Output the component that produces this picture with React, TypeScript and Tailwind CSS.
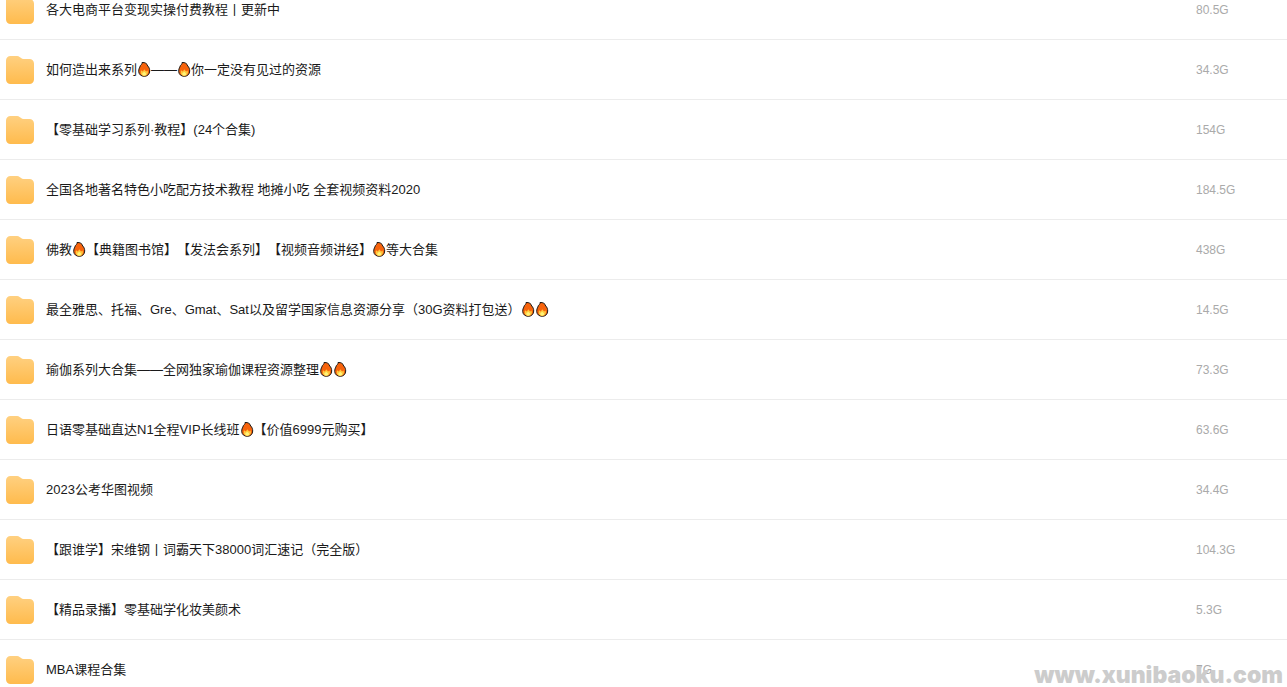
import { Fragment } from "react";

type Entry = { name: string; size: string };

const entries: Entry[] = [
  { name: "各大电商平台变现实操付费教程丨更新中", size: "80.5G" },
  { name: "如何造出来系列🔥——🔥你一定没有见过的资源", size: "34.3G" },
  { name: "【零基础学习系列·教程】(24个合集)", size: "154G" },
  { name: "全国各地著名特色小吃配方技术教程 地摊小吃 全套视频资料2020", size: "184.5G" },
  { name: "佛教🔥【典籍图书馆】【发法会系列】【视频音频讲经】🔥等大合集", size: "438G" },
  { name: "最全雅思、托福、Gre、Gmat、Sat以及留学国家信息资源分享（30G资料打包送）🔥🔥", size: "14.5G" },
  { name: "瑜伽系列大合集——全网独家瑜伽课程资源整理🔥🔥", size: "73.3G" },
  { name: "日语零基础直达N1全程VIP长线班🔥【价值6999元购买】", size: "63.6G" },
  { name: "2023公考华图视频", size: "34.4G" },
  { name: "【跟谁学】宋维钢丨词霸天下38000词汇速记（完全版）", size: "104.3G" },
  { name: "【精品录播】零基础学化妆美颜术", size: "5.3G" },
  { name: "MBA课程合集", size: "7G" },
];

function FolderIcon() {
  return (
    <svg viewBox="0 0 28 28" className="size-7 shrink-0" aria-hidden="true">
      <defs>
        <linearGradient id="folder" x1="0" y1="0" x2="0" y2="1">
          <stop offset="0" stopColor="#ffd080" />
          <stop offset="1" stopColor="#ffbb4d" />
        </linearGradient>
      </defs>
      <path
        fill="url(#folder)"
        d="M4.500 0h6.700c1 0 1.700.3 2.400.9l1.500 1.200c.7.600 1.400.9 2.300.9h6.100A4.500 4.500 0 0 1 28 7.500v16a4.500 4.500 0 0 1-4.500 4.500h-19A4.500 4.500 0 0 1 0 23.500v-19A4.500 4.500 0 0 1 4.500 0z"
      />
    </svg>
  );
}

function Flame() {
  return (
    <svg viewBox="0 0 14 16" className="-mt-1 inline-block h-4 w-3.5 align-middle" role="img" aria-label="🔥">
      <path
        d="M5 1.500C8 1.200 10.200 2.600 10.700 5c1.400 1.200 2 3 2 5 0 3.200-2.300 5.300-5.400 5.300S1.700 13.300 1.700 10.300c0-1.800.4-3 1.100-4.200.2-1.300.9-2 1.700-2.700.5-.6.7-1.200.5-1.900z"
        fill="#f7630c"
        stroke="#1c1a18"
        strokeWidth="1"
        strokeLinejoin="round"
      />
      <path d="M4.100 9.300l1.500 1.200c.7-.5 1.300-1.200 1.700-2.200.6 1.200 1.300 1.700 2 2.200l1.200-.9c.3.700.4 1.300.4 2 0 2-1.500 3.300-3.500 3.300s-3.700-1.200-3.700-3.200c0-.9.100-1.700.4-2.400z" fill="#ffc83d" />
      <path d="M7.200 10.800c.6.800 1.900 1.100 1.900 2.200 0 1-.8 1.500-1.900 1.500s-1.900-.5-1.900-1.500c0-1.100 1.300-1.400 1.900-2.200z" fill="#fff478" />
    </svg>
  );
}

function FileName({ text }: { text: string }) {
  return (
    <>
      {text.split("🔥").map((part, i) => (
        <Fragment key={i}>
          {i > 0 && <Flame />}
          {part}
        </Fragment>
      ))}
    </>
  );
}

export default function App() {
  return (
    <main className="relative h-screen overflow-hidden bg-white font-['Liberation_Sans','Noto_Sans_CJK_SC',sans-serif]">
      <table className="-mt-5 w-full table-fixed border-separate border-spacing-0">
        <colgroup>
          <col />
          <col className="w-[91px]" />
        </colgroup>
        <tbody>
          {entries.map((entry) => (
            <tr key={entry.name} className="h-15">
              <td className="border-b border-[#ececec] p-0 pt-px pl-1.5">
                <a
                  href="#"
                  className="flex items-center gap-3 text-[13px] leading-5 whitespace-nowrap text-[#1a1a1a] [text-spacing-trim:space-all]"
                >
                  <FolderIcon />
                  <span>
                    <FileName text={entry.name} />
                  </span>
                </a>
              </td>
              <td className="border-b border-[#ececec] p-0 pt-px text-xs leading-5 text-[#aaaaaa]">{entry.size}</td>
            </tr>
          ))}
        </tbody>
      </table>
      <p className="absolute right-1 bottom-0 font-['Inter',sans-serif] text-[23px] leading-6 font-black text-[#cccccc]">
        www.xunibaoku.com
      </p>
    </main>
  );
}
